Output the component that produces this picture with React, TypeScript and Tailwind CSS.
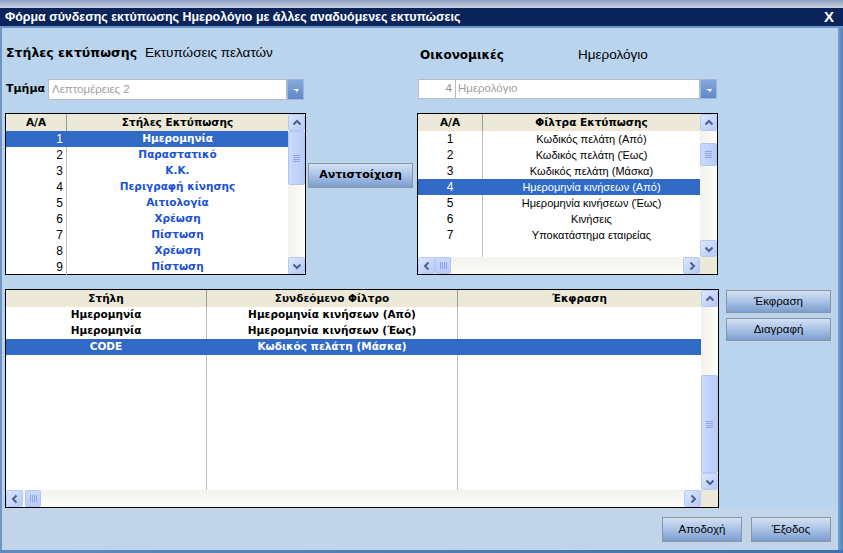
import React from 'react'

const sans = "font-['Liberation_Sans',Arial,sans-serif]"
const tahoma = "font-['DejaVu_Sans',Verdana,sans-serif]"

function Chevron({ dir }: { dir: 'up' | 'down' | 'left' | 'right' }) {
  const d = {
    up: 'M1.5 6.5 L5 3 L8.5 6.5',
    down: 'M1.5 3.5 L5 7 L8.5 3.5',
    left: 'M6.5 1.5 L3 5 L6.5 8.5',
    right: 'M3.5 1.5 L7 5 L3.5 8.5',
  }[dir]
  return (
    <svg width="10" height="10" viewBox="0 0 10 10">
      <path d={d} fill="none" stroke="#4d6185" strokeWidth="2" />
    </svg>
  )
}

function ScrollBtn({ dir }: { dir: 'up' | 'down' | 'left' | 'right' }) {
  return (
    <div className="w-[17px] h-[17px] shrink-0 flex items-center justify-center rounded-[2px] border border-[#b8cbf5] bg-linear-to-br from-[#dde7fd] to-[#b5c9f6]">
      <Chevron dir={dir} />
    </div>
  )
}

function Grip({ vertical }: { vertical: boolean }) {
  return vertical ? (
    <div className="flex flex-col gap-[1px]">
      <div className="w-[7px] h-[1px] bg-[#8ea6e0]" />
      <div className="w-[7px] h-[1px] bg-[#8ea6e0]" />
      <div className="w-[7px] h-[1px] bg-[#8ea6e0]" />
      <div className="w-[7px] h-[1px] bg-[#8ea6e0]" />
    </div>
  ) : (
    <div className="flex gap-[1px]">
      <div className="w-[1px] h-[7px] bg-[#8ea6e0]" />
      <div className="w-[1px] h-[7px] bg-[#8ea6e0]" />
      <div className="w-[1px] h-[7px] bg-[#8ea6e0]" />
      <div className="w-[1px] h-[7px] bg-[#8ea6e0]" />
    </div>
  )
}

function VScroll({ thumbTop, thumbH }: { thumbTop: number; thumbH: number }) {
  return (
    <div className="w-[17px] shrink-0 flex flex-col bg-linear-to-r from-[#f3f2ec] to-[#fdfdfa]">
      <ScrollBtn dir="up" />
      <div className="flex-1 flex flex-col">
        <div style={{ height: thumbTop }} />
        <div
          style={{ height: thumbH }}
          className="w-[17px] flex items-center justify-center rounded-[2px] border border-[#b2c5f2] bg-linear-to-r from-[#cbd9fc] to-[#b9ccf7]"
        >
          <Grip vertical />
        </div>
      </div>
      <ScrollBtn dir="down" />
    </div>
  )
}

function HScroll({ thumbLeft }: { thumbLeft: number }) {
  return (
    <div className="h-[17px] flex bg-linear-to-b from-[#f3f2ec] to-[#fdfdfa]">
      <ScrollBtn dir="left" />
      <div className="flex-1 flex">
        <div style={{ width: thumbLeft }} />
        <div className="w-[16px] h-[17px] flex items-center justify-center rounded-[2px] border border-[#b2c5f2] bg-linear-to-b from-[#cbd9fc] to-[#b9ccf7]">
          <Grip vertical={false} />
        </div>
      </div>
      <ScrollBtn dir="right" />
    </div>
  )
}

type Col = { w: number | null; title: string; align: 'center' | 'right' }

function Grid({
  cols,
  rows,
  selected,
  cellClass,
  selClass,
  firstClass,
  thumbTop,
  thumbH,
  hthumb,
  className,
}: {
  cols: Col[]
  rows: string[][]
  selected: number
  cellClass: string
  selClass: string
  firstClass?: string
  thumbTop: number
  thumbH: number
  hthumb?: number
  className: string
}) {
  const cell = (c: Col, i: number, text: string, sel: boolean, last: boolean) => (
    <div
      key={i}
      style={c.w ? { width: c.w } : undefined}
      className={`${c.w ? 'shrink-0' : 'flex-1'} h-full flex items-center px-[3px] whitespace-nowrap overflow-hidden ${
        c.align === 'right' ? 'justify-end' : 'justify-center'
      } ${last ? '' : sel ? 'border-r border-[#316ac5]' : 'border-r border-[#c0c0c0]'} ${
        i === 0 && firstClass ? firstClass : ''
      }`}
    >
      {text}
    </div>
  )
  return (
    <div className={`border border-black bg-white flex flex-col ${className}`}>
      <div className="flex-1 flex min-h-0">
        <div className="flex-1 flex flex-col min-w-0">
          <div className={`h-[17px] shrink-0 flex bg-[#ece9d8] ${tahoma} font-bold text-[10.5px] text-black`}>
            {cols.map((c, i) => (
              <div
                key={i}
                style={c.w ? { width: c.w } : undefined}
                className={`${c.w ? 'shrink-0' : 'flex-1'} flex items-center justify-center ${
                  i < cols.length - 1 ? 'border-r border-[#9a9a9a]' : ''
                }`}
              >
                {c.title}
              </div>
            ))}
          </div>
          {rows.map((r, ri) => {
            const sel = ri === selected
            return (
              <div key={ri} className={`h-[16px] shrink-0 flex ${sel ? selClass : cellClass}`}>
                {cols.map((c, i) => cell(c, i, r[i] ?? '', sel, i === cols.length - 1))}
              </div>
            )
          })}
          <div className="flex-1 flex">
            {cols.map((c, i) => cell(c, i, '', false, i === cols.length - 1))}
          </div>
        </div>
        <VScroll thumbTop={thumbTop} thumbH={thumbH} />
      </div>
      {hthumb !== undefined && (
        <div className="flex shrink-0">
          <div className="flex-1">
            <HScroll thumbLeft={hthumb} />
          </div>
          <div className="w-[17px] h-[17px] bg-[#ece9d8]" />
        </div>
      )}
    </div>
  )
}

function XpButton({ children, className }: { children: React.ReactNode; className: string }) {
  return (
    <div
      className={`flex items-center justify-center border border-[#8d96a0] bg-linear-to-b from-[#d3e1f4] via-[#a9c2e6] to-[#7b9dcf] text-black ${className}`}
    >
      {children}
    </div>
  )
}

function DropBtn() {
  return (
    <div className="w-[17px] h-full shrink-0 flex items-center justify-center border border-[#9fb5da] bg-linear-to-b from-[#86a9dc] to-[#5d88ca]">
      <svg width="7" height="6" viewBox="0 0 7 6" className="mt-[3px] ml-[1px]">
        <path d="M0 1 H6 L3.5 5 L3.5 3 Z" fill="white" />
      </svg>
    </div>
  )
}

export default function App() {
  const leftRows = [
    ['1', 'Ημερομηνία'],
    ['2', 'Παραστατικό'],
    ['3', 'Κ.Κ.'],
    ['4', 'Περιγραφή κίνησης'],
    ['5', 'Αιτιολογία'],
    ['6', 'Χρέωση'],
    ['7', 'Πίστωση'],
    ['8', 'Χρέωση'],
    ['9', 'Πίστωση'],
  ]
  const rightRows = [
    ['1', 'Κωδικός πελάτη (Από)'],
    ['2', 'Κωδικός πελάτη (Έως)'],
    ['3', 'Κωδικός πελάτη (Μάσκα)'],
    ['4', 'Ημερομηνία κινήσεων (Από)'],
    ['5', 'Ημερομηνία κινήσεων (Έως)'],
    ['6', 'Κινήσεις'],
    ['7', 'Υποκατάστημα εταιρείας'],
  ]
  const linkRows = [
    ['Ημερομηνία', 'Ημερομηνία κινήσεων (Από)', ''],
    ['Ημερομηνία', 'Ημερομηνία κινήσεων (Έως)', ''],
    ['CODE', 'Κωδικός πελάτη (Μάσκα)', ''],
  ]

  return (
    <div className={`w-[843px] h-[553px] flex flex-col bg-[#bad4ee] overflow-hidden ${sans}`}>
      {/* title bar */}
      <div className="h-[8px] shrink-0 bg-linear-to-b from-[#8d9fc3] to-[#c9d2e0]" />
      <div className="h-[18px] shrink-0 bg-[#0b2459] flex items-center justify-between pl-[5px] pr-[9px]">
        <span className="font-bold text-[13.5px] text-white origin-left scale-x-[0.92] whitespace-nowrap">
          Φόρμα σύνδεσης εκτύπωσης Ημερολόγιο με άλλες αναδυόμενες εκτυπώσεις
        </span>
        <span className="font-bold text-[15px] text-white">X</span>
      </div>
      <div className="h-[2px] shrink-0 bg-[#6e95c8]" />

      <div className="flex-1 flex min-h-0">
        <div className="w-[2px] shrink-0 bg-[#6f94c6]" />
        <div className="flex-1 flex flex-col min-w-0">
          <div className="flex-1 flex flex-col pl-[3px]">
            {/* labels */}
            <div className="flex mt-[14px] h-[22px] items-center">
              <div className="w-[301px] shrink-0 flex items-center pl-[1px]">
                <span className={`${tahoma} font-bold text-[12.5px] text-black w-[139px]`}>Στήλες εκτύπωσης</span>
                <span className="text-[13.5px] text-black">Εκτυπώσεις πελατών</span>
              </div>
              <div className="w-[111px] shrink-0" />
              <div className="flex items-center pl-[3px] pt-[4px]">
                <span className={`${tahoma} font-bold text-[12px] text-black w-[158px]`}>Οικονομικές</span>
                <span className="text-[13.5px] text-black">Ημερολόγιο</span>
              </div>
            </div>

            {/* inputs */}
            <div className="flex mt-[15px] h-[21px]">
              <div className="w-[301px] shrink-0 flex items-center">
                <span className={`${tahoma} font-bold text-[11px] text-black w-[43px] pl-[1px]`}>Τμήμα</span>
                <div className="w-[239px] h-[21px] bg-white border border-[#b5bcc6] rounded-l-[2px] flex items-center pl-[3px] text-[11.5px] text-[#a0a0a0]">
                  Λεπτομέρειες 2
                </div>
                <div className="h-[21px]">
                  <DropBtn />
                </div>
              </div>
              <div className="w-[112px] shrink-0" />
              <div className="flex h-[20px]">
                <div className="w-[38px] h-[20px] bg-white border border-[#b5bcc6] flex items-center justify-end pr-[3px] text-[11.5px] text-[#909090]">
                  4
                </div>
                <div className="w-[244px] h-[20px] bg-white border border-[#b5bcc6] border-l-0 flex items-center pl-[2px] text-[11.5px] text-[#a0a0a0]">
                  Ημερολόγιο
                </div>
                <DropBtn />
              </div>
            </div>

            {/* upper grids */}
            <div className="flex mt-[13px] h-[162px]">
              <Grid
                className="w-[301px] h-[162px] shrink-0"
                cols={[
                  { w: 61, title: 'A/A', align: 'right' },
                  { w: null, title: 'Στήλες Εκτύπωσης', align: 'center' },
                ]}
                rows={leftRows}
                selected={0}
                cellClass={`${tahoma} font-bold text-[10.5px] text-[#1a52d8] [&>div:first-child]:text-black`}
                selClass={`${tahoma} font-bold text-[10.5px] bg-[#316ac5] text-white`}
                firstClass={`${sans} !font-normal text-[12px]`}
                thumbTop={0}
                thumbH={54}
              />
              <div className="w-[105px] shrink-0 ml-[2px] pt-[50px]">
                <XpButton className={`h-[25px] ${tahoma} font-bold text-[11px]`}>Αντιστοίχιση</XpButton>
              </div>
              <Grid
                className="w-[301px] h-[162px] shrink-0 ml-[4px]"
                cols={[
                  { w: 65, title: 'A/A', align: 'center' },
                  { w: null, title: 'Φίλτρα Εκτύπωσης', align: 'center' },
                ]}
                rows={rightRows}
                selected={3}
                cellClass="text-[11px] text-black"
                selClass="text-[11px] bg-[#316ac5] text-white"
                firstClass="text-[12px]"
                thumbTop={12}
                thumbH={23}
                hthumb={0}
              />
            </div>

            {/* link grid + side buttons */}
            <div className="flex mt-[14px]">
              <Grid
                className="w-[714px] h-[219px] shrink-0"
                cols={[
                  { w: 201, title: 'Στήλη', align: 'center' },
                  { w: 251, title: 'Συνδεόμενο Φίλτρο', align: 'center' },
                  { w: null, title: 'Έκφραση', align: 'center' },
                ]}
                rows={linkRows}
                selected={2}
                cellClass={`${tahoma} font-bold text-[10.5px] text-black`}
                selClass={`${tahoma} font-bold text-[10.5px] bg-[#316ac5] text-white`}
                thumbTop={68}
                thumbH={98}
                hthumb={2}
              />
              <div className="ml-[7px] mt-[1px] flex flex-col gap-[5px]">
                <XpButton className="w-[105px] h-[23px] text-[11.5px]">Έκφραση</XpButton>
                <XpButton className="w-[105px] h-[23px] text-[11.5px]">Διαγραφή</XpButton>
              </div>
            </div>
          </div>

          {/* footer */}
          <div className="h-[42px] shrink-0 bg-[#c2d4ea] flex justify-end items-start pt-[9px] pr-[7px] gap-[9px]">
            <XpButton className="w-[80px] h-[25px] text-[11.5px]">Αποδοχή</XpButton>
            <XpButton className="w-[80px] h-[25px] text-[11.5px]">Έξοδος</XpButton>
          </div>
        </div>
        <div className="w-[5px] shrink-0 bg-linear-to-r from-[#7aa1d0] to-[#4f7fb6]" />
      </div>
      <div className="h-[3px] shrink-0 bg-linear-to-r from-[#5e8cc0] to-[#3f71aa]" />
    </div>
  )
}
